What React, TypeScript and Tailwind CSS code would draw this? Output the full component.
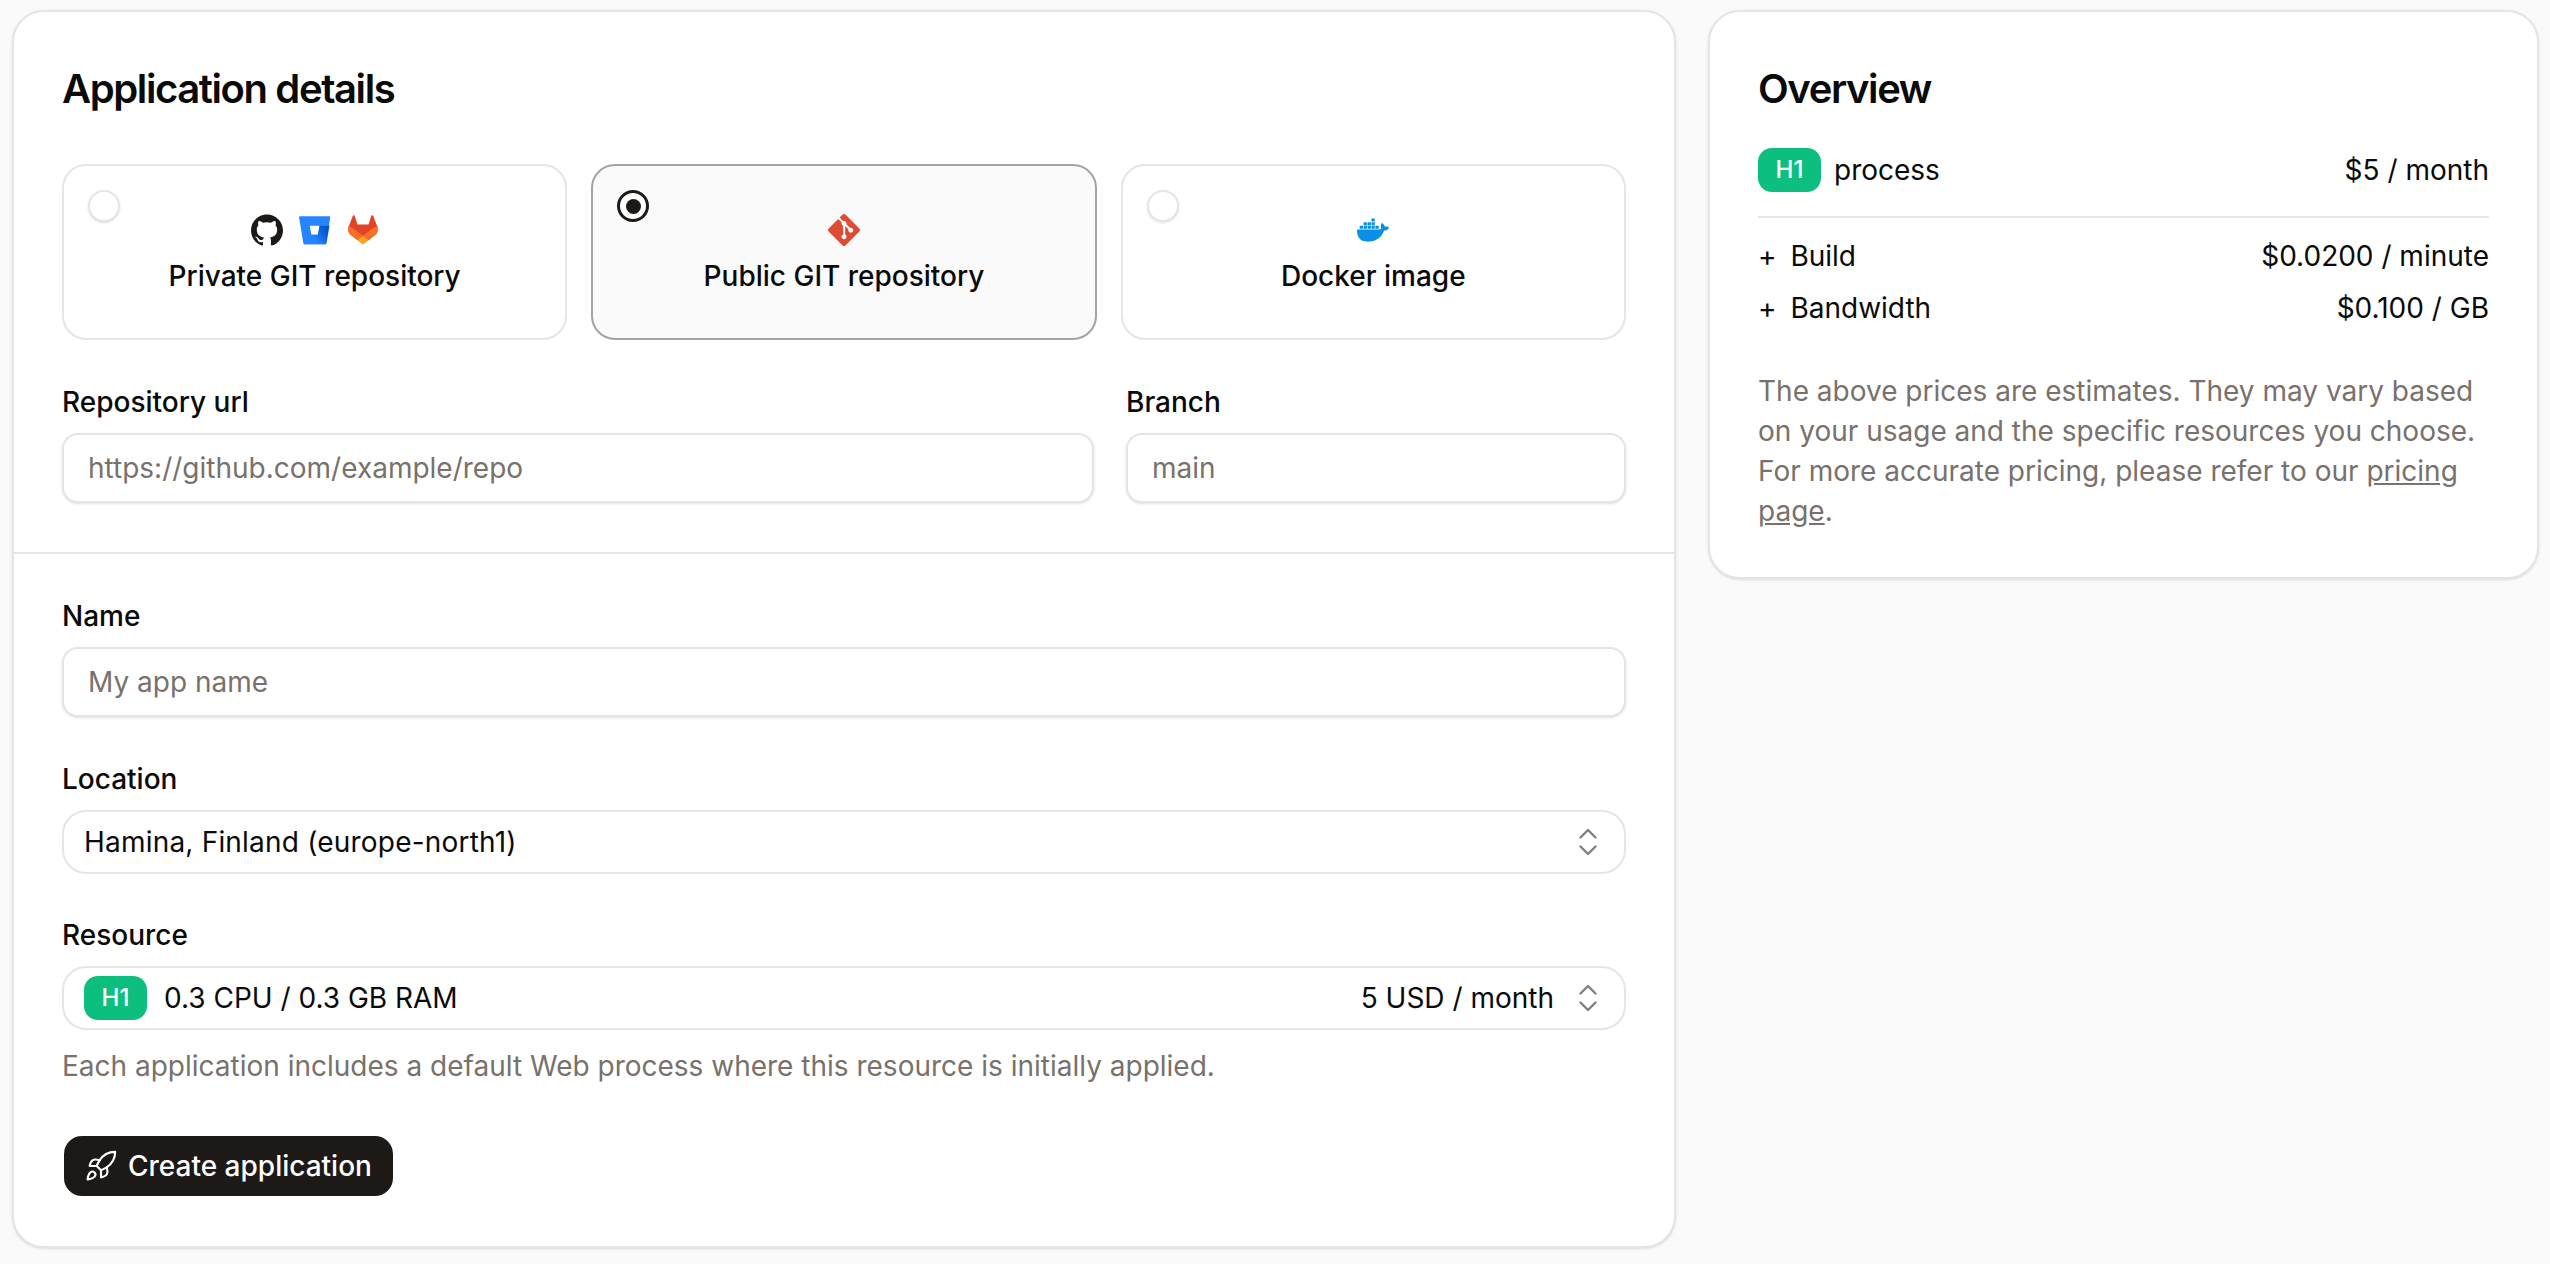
import { ChevronsUpDown, Rocket } from "lucide-react"
import { SiDocker, SiGit, SiGithub } from "react-icons/si"
import type { ReactNode } from "react"

function BitbucketLogo() {
  return (
    <svg width="32" height="32" viewBox="0 0 25.6 24" className="shrink-0">
      <defs>
        <linearGradient id="bb" x1="25" y1="10.6" x2="13" y2="20" gradientUnits="userSpaceOnUse">
          <stop offset="0.18" stopColor="#0052CC" />
          <stop offset="1" stopColor="#2684FF" />
        </linearGradient>
      </defs>
      <path fill="#2684FF" d="M.87.99a.8.8 0 0 0-.8.93l3.39 20.6a1.09 1.09 0 0 0 1.07.91h16.28a.8.8 0 0 0 .8-.67L25 1.92a.8.8 0 0 0-.8-.93ZM15.16 15.88H9.96L8.55 8.52h7.87Z" />
      <path fill="url(#bb)" d="M24.33 8.52h-7.91l-1.26 7.36h-5.2L4.22 23.1a1.08 1.08 0 0 0 .7.26h16.29a.8.8 0 0 0 .8-.67Z" />
    </svg>
  )
}

function GitlabLogo() {
  return (
    <svg width="32" height="32" viewBox="106 112 168 160" className="shrink-0">
      <path fill="#e24329" d="M265.26416,174.37243l-.2134-.55822-21.19899-55.30908c-.4236-1.08359-1.18542-1.99642-2.17699-2.62689-.98837-.63373-2.14749-.93253-3.32305-.87014-1.1689.06239-2.29195.48925-3.20809,1.21821-.90957.73554-1.56629,1.73047-1.87493,2.85346l-14.31327,43.80662h-57.90965l-14.31327-43.80662c-.30864-1.12299-.96536-2.11791-1.87493-2.85346-.91614-.72895-2.03911-1.15582-3.20809-1.21821-1.17548-.06239-2.33468.23641-3.32297.87014-.99166.63047-1.75348,1.5433-2.17707,2.62689l-21.19891,55.31237-.21348.55493c-6.28158,16.38521-.92929,34.90803,13.05891,45.48782.02621.01641.04922.03611.07552.05582l.18719.14119,32.29094,24.17392,15.97151,12.09024,9.71951,7.34871c2.34117,1.77316,5.57877,1.77316,7.92002,0l9.71943-7.34871,15.96822-12.09024,32.48142-24.31511c.02958-.02299.05588-.04269.08538-.06568,13.97834-10.57977,19.32735-29.09604,13.04905-45.47796Z" />
      <path fill="#fc6d26" d="M265.26416,174.37243l-.2134-.55822c-10.5174,2.16062-20.20405,6.6099-28.49844,12.81593-.1346.0985-25.20497,19.05805-46.55171,35.19699,15.84998,11.98517,29.6477,22.40405,29.6477,22.40405l32.48142-24.31511c.02958-.02299.05588-.04269.08538-.06568,13.97834-10.57977,19.32735-29.09604,13.04905-45.47796Z" />
      <path fill="#fca326" d="M160.34962,244.23117l15.97151,12.09024,9.71951,7.34871c2.34117,1.77316,5.57877,1.77316,7.92002,0l9.71943-7.34871,15.96822-12.09024s-13.79772-10.41888-29.6477-22.40405c-15.85327,11.98517-29.65099,22.40405-29.65099,22.40405Z" />
      <path fill="#fc6d26" d="M143.44561,186.63014c-8.29111-6.20274-17.97446-10.65531-28.49507-12.81264l-.21348.55493c-6.28158,16.38521-.92929,34.90803,13.05891,45.48782.02621.01641.04922.03611.07552.05582l.18719.14119,32.29094,24.17392s13.79772-10.41888,29.65099-22.40405c-21.34673-16.13894-46.41724-35.09848-46.55499-35.19699Z" />
    </svg>
  )
}

function Badge() {
  return (
    <span className="flex h-[44px] w-[63px] shrink-0 items-center justify-center rounded-[14px] bg-[#0cbf7e] text-[24px] font-medium text-white">
      H1
    </span>
  )
}

function SourceTile({ label, selected, children }: { label: string; selected?: boolean; children: ReactNode }) {
  return (
    <div
      className={
        selected
          ? "relative flex h-[176px] flex-col items-center rounded-[24px] border-2 border-[#a8a29e] bg-[#fafafa] pt-[48px]"
          : "relative flex h-[176px] flex-col items-center rounded-[24px] border-2 border-[#e7e5e4] bg-white pt-[48px]"
      }
    >
      {selected ? (
        <span className="absolute left-[24px] top-[24px] flex h-[32px] w-[32px] items-center justify-center rounded-full border-[3px] border-[#1c1917] bg-white">
          <span className="h-[15px] w-[15px] rounded-full bg-[#1c1917]" />
        </span>
      ) : (
        <span className="absolute left-[24px] top-[24px] h-[32px] w-[32px] rounded-full border-2 border-[#e7e5e4] bg-white shadow-sm" />
      )}
      <div className="flex h-[32px] items-center gap-[16px]">{children}</div>
      <div className="mt-[10px] text-[28px] font-medium leading-[40px] text-[#0a0a0a]">{label}</div>
    </div>
  )
}

function Label({ children }: { children: ReactNode }) {
  return <div className="mb-[16px] text-[28px] font-medium leading-[30px] text-[#0a0a0a]">{children}</div>
}

function TextField({ placeholder }: { placeholder: string }) {
  return (
    <input
      placeholder={placeholder}
      className="h-[70px] w-full rounded-[16px] border-2 border-[#e7e5e4] bg-white px-[24px] text-[28px] text-[#0a0a0a] shadow-sm outline-none placeholder:text-[#78716c]"
    />
  )
}

function PriceRow({ label, price }: { label: string; price: string }) {
  return (
    <div className="flex h-[52px] items-center justify-between text-[28px] text-[#0a0a0a]">
      <span>
        <span className="mr-[6px]">+</span> {label}
      </span>
      <span>{price}</span>
    </div>
  )
}

export default function App() {
  return (
    <div className="flex min-h-screen items-start gap-[32px] bg-[#fafafa] px-[12px] pt-[10px] font-['Inter',sans-serif]">
      <div className="w-[1664px] shrink-0 rounded-[32px] border-2 border-[#e7e5e4] bg-white shadow-sm">
        <div className="border-b-2 border-[#e7e5e4] px-[48px] pb-[49px] pt-[48px]">
          <h2 className="mb-[46px] text-[40px] font-semibold leading-[58px] tracking-[-0.035em] text-[#0a0a0a]">Application details</h2>
          <div className="mb-[47px] grid grid-cols-3 gap-[24px]">
            <SourceTile label="Private GIT repository">
              <SiGithub size={32} color="#1c1917" />
              <BitbucketLogo />
              <GitlabLogo />
            </SourceTile>
            <SourceTile label="Public GIT repository" selected>
              <SiGit size={32} color="#de4c36" />
            </SourceTile>
            <SourceTile label="Docker image">
              <SiDocker size={32} color="#0a8fe6" />
            </SourceTile>
          </div>
          <div className="flex gap-[32px]">
            <div className="w-[1032px]">
              <Label>Repository url</Label>
              <TextField placeholder="https://github.com/example/repo" />
            </div>
            <div className="flex-1">
              <Label>Branch</Label>
              <TextField placeholder="main" />
            </div>
          </div>
        </div>

        <div className="px-[48px] pb-[50px] pt-[47px]">
          <Label>Name</Label>
          <TextField placeholder="My app name" />

          <div className="mt-[47px]">
            <Label>Location</Label>
            <div className="flex h-[64px] items-center justify-between rounded-[24px] border-2 border-[#e7e5e4] pl-[20px] pr-[18px] text-[28px] text-[#0a0a0a]">
              <span className="tracking-[0.2px]">Hamina, Finland (europe-north1)</span>
              <ChevronsUpDown size={36} strokeWidth={1.6} color="#857f7b" />
            </div>
          </div>

          <div className="mt-[46px]">
            <Label>Resource</Label>
            <div className="flex h-[64px] items-center rounded-[24px] border-2 border-[#e7e5e4] pl-[20px] pr-[18px] text-[28px] text-[#0a0a0a]">
              <Badge />
              <span className="ml-[17px] flex-1">0.3 CPU / 0.3 GB RAM</span>
              <span className="mr-[16px]">5 USD / month</span>
              <ChevronsUpDown size={36} strokeWidth={1.6} color="#857f7b" />
            </div>
          </div>

          <p className="mt-[16px] text-[28px] leading-[40px] text-[#78716c]">
            Each application includes a default Web process where this resource is initially applied.
          </p>

          <button className="ml-[2px] mt-[50px] flex h-[60px] w-[329px] items-center gap-[10px] rounded-[18px] bg-[#1c1917] pl-[20px] text-[28px] font-medium text-white">
            <Rocket size={34} strokeWidth={1.5} />
            Create application
          </button>
        </div>
      </div>

      <div className="w-[831px] shrink-0 rounded-[32px] border-2 border-[#e7e5e4] bg-white px-[48px] pb-[46px] pt-[48px] shadow-sm">
        <h2 className="text-[40px] font-semibold leading-[58px] tracking-[-0.035em] text-[#0a0a0a]">Overview</h2>
        <div className="mt-[30px] flex items-center justify-between border-b-2 border-[#e7e5e4] pb-[24px] text-[28px] text-[#0a0a0a]">
          <div className="flex items-center gap-[13px]">
            <Badge />
            <span>process</span>
          </div>
          <span>$5 / month</span>
        </div>
        <div className="mt-[12px]">
          <PriceRow label="Build" price="$0.0200 / minute" />
          <PriceRow label="Bandwidth" price="$0.100 / GB" />
        </div>
        <p className="mt-[37px] text-[28px] leading-[40px] text-[#78716c]">
          The above prices are estimates. They may vary based on your usage and the specific resources you choose. For more accurate pricing, please refer to our <span className="underline">pricing page</span>.
        </p>
      </div>
    </div>
  )
}
